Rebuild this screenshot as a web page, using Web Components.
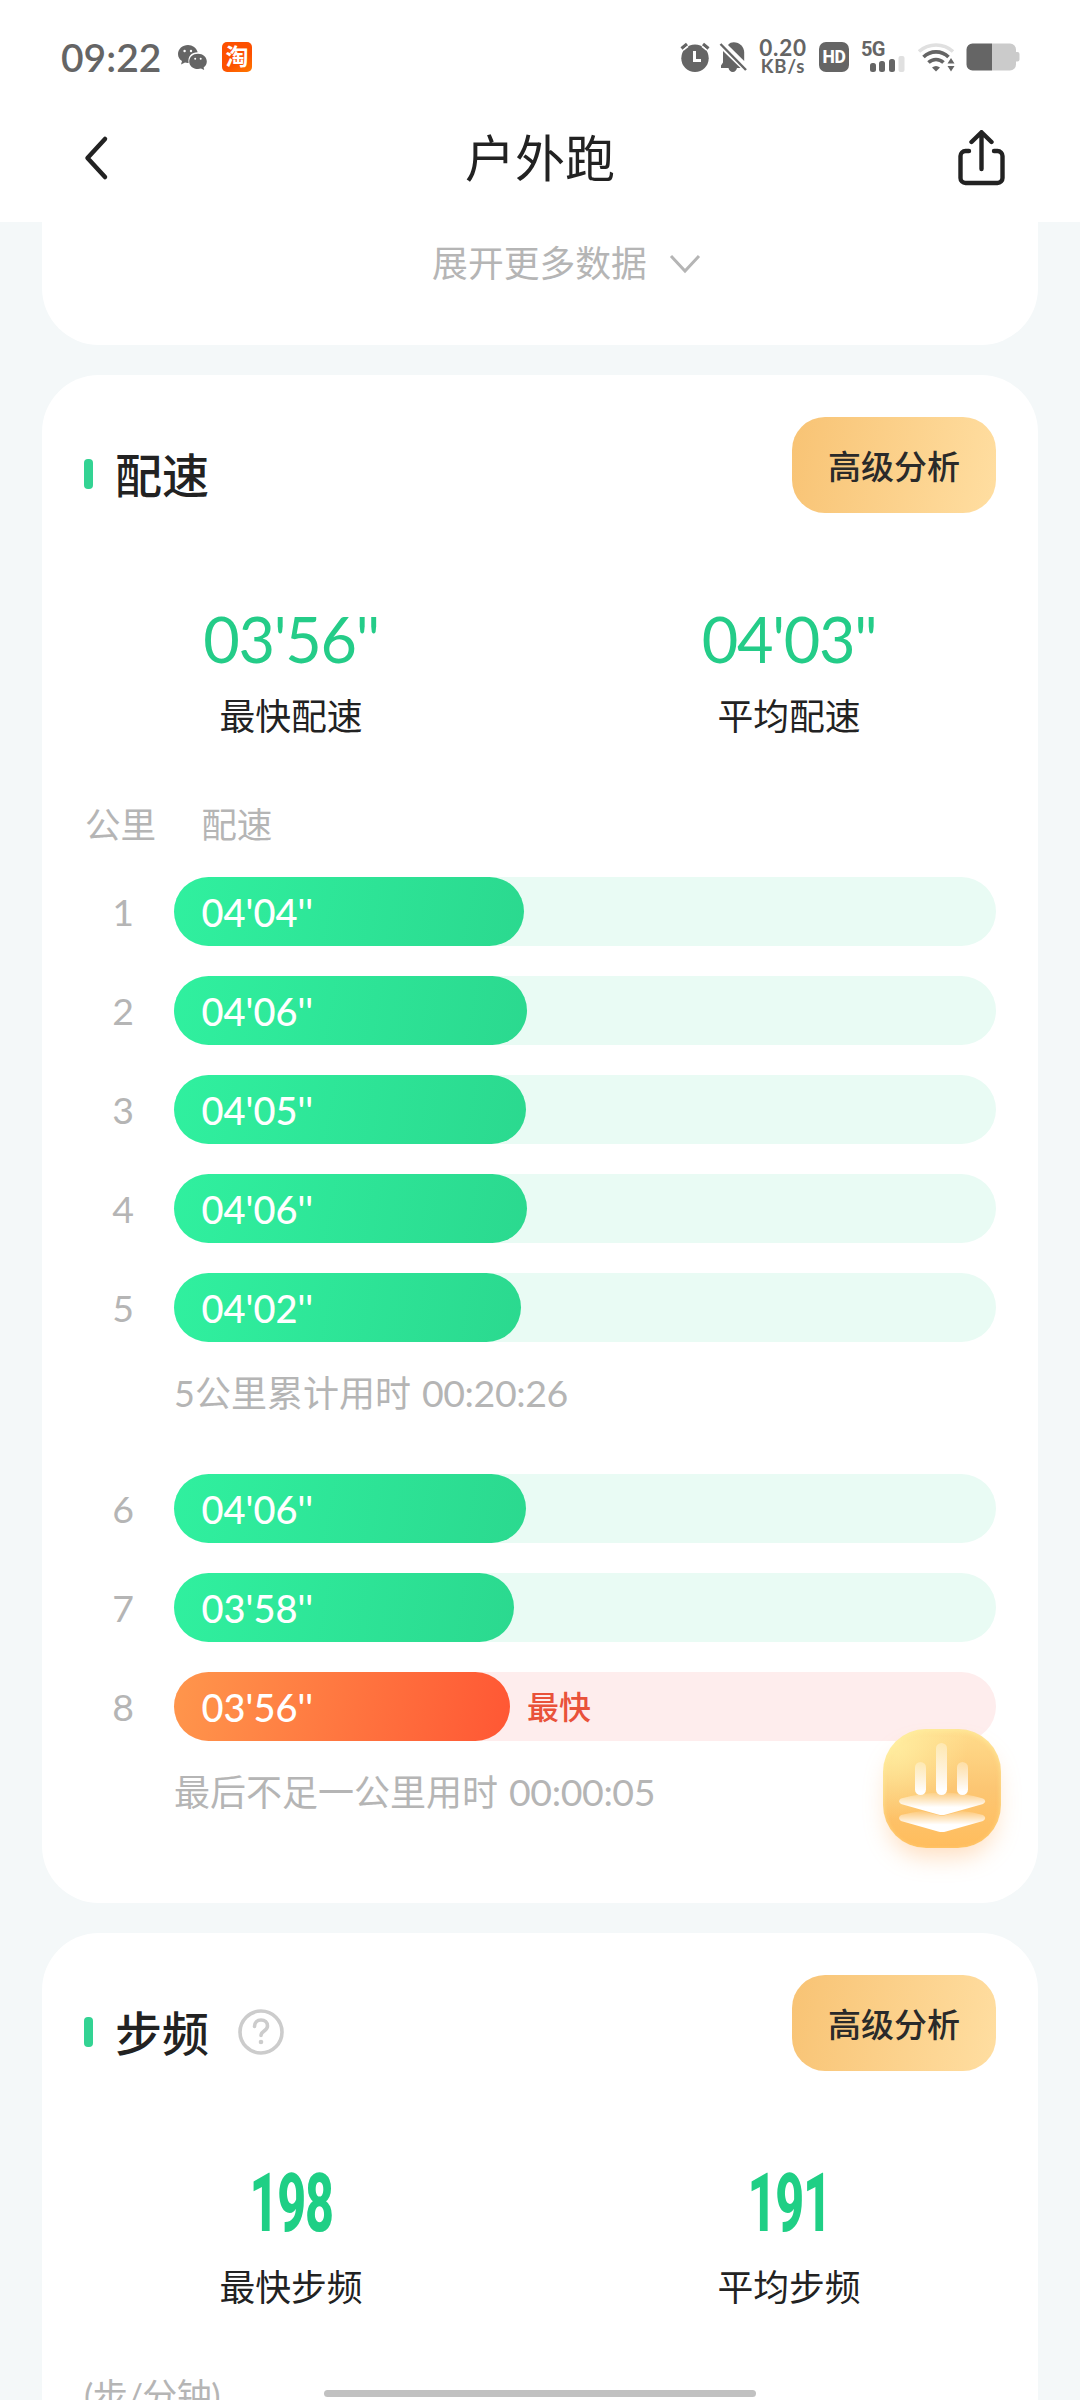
<!DOCTYPE html>
<html lang="zh-CN">
<head>
<meta charset="utf-8">
<title>户外跑</title>
<style>
  body {
    margin: 0;
    font-family: Lato, 'Noto Sans CJK SC', sans-serif;
    --color-text: #222;
    --color-sub: #b5b5b5;
    --color-status: #656565;
    --color-green: #24cc88;
    --color-bg: #f4f8f9;
  }
</style>
</head>
<body>
<run-page>
  <status-bar slot="top" time="09:22"></status-bar>
  <nav-bar slot="top">户外跑</nav-bar>

  <data-card class="summary">
    <expand-button>展开更多数据</expand-button>
  </data-card>

  <data-card class="pace">
    <card-header title-text="配速" action="高级分析"></card-header>
    <stat-group>
      <stat-item value="03'56''" label="最快配速"></stat-item>
      <stat-item value="04'03&quot;" label="平均配速"></stat-item>
    </stat-group>
    <pace-list>
      <pace-row km="1" pace="04'04''" width="350"></pace-row>
      <pace-row km="2" pace="04'06''" width="353"></pace-row>
      <pace-row km="3" pace="04'05''" width="352"></pace-row>
      <pace-row km="4" pace="04'06''" width="353"></pace-row>
      <pace-row km="5" pace="04'02''" width="347"></pace-row>
      <pace-note label="5公里累计用时" time="00:20:26"></pace-note>
      <pace-row km="6" pace="04'06''" width="352"></pace-row>
      <pace-row km="7" pace="03'58''" width="340"></pace-row>
      <pace-row km="8" pace="03'56''" width="336" tag="最快" fastest></pace-row>
      <pace-note label="最后不足一公里用时" time="00:00:05"></pace-note>
    </pace-list>
  </data-card>

  <data-card class="cadence">
    <card-header title-text="步频" action="高级分析" help></card-header>
    <stat-group>
      <stat-item value="198" label="最快步频" condensed></stat-item>
      <stat-item value="191" label="平均步频" condensed></stat-item>
    </stat-group>
    <chart-unit>(步/分钟)</chart-unit>
  </data-card>

  <analysis-fab slot="float"></analysis-fab>
</run-page>

<script>
class RunPage extends HTMLElement {
  constructor() {
    super();
    this.attachShadow({ mode: 'open' });
  }

  connectedCallback() {
    this.shadowRoot.innerHTML = `
      <style>
        :host {
          display: flex;
          flex-direction: column;
          position: relative;
          width: 1080px;
          height: 2400px;
          overflow: hidden;
          background: var(--color-bg);
          color: var(--color-text);
        }
        .run-page__top {
          flex: none;
          height: 222px;
          background: #fff;
        }
        .run-page__content {
          display: flex;
          flex-direction: column;
          gap: 30px;
          padding: 0 42px;
        }
        .run-page__home {
          position: absolute;
          left: 324px;
          bottom: 3px;
          width: 432px;
          height: 7px;
          border-radius: 4px;
          background: #c1c1c1;
        }
      </style>
      <div class='run-page__top'><slot name='top'></slot></div>
      <div class='run-page__content'><slot></slot></div>
      <slot name='float'></slot>
      <div class='run-page__home'></div>
    `;
  }
}
customElements.define('run-page', RunPage);

class StatusBar extends HTMLElement {
  constructor() {
    super();
    this.attachShadow({ mode: 'open' });
  }

  connectedCallback() {
    this.render();
  }

  get styles() {
    return `
      <style>
        :host {
          display: flex;
          align-items: center;
          box-sizing: border-box;
          height: 94px;
          padding: 20px 60px 0 61px;
          color: var(--color-status);
        }
        svg {
          display: block;
          flex: none;
        }
        .time {
          width: 117px;
          font-size: 39px;
          font-weight: 600;
          line-height: 48px;
          white-space: nowrap;
        }
        .taobao {
          width: 30px;
          height: 30px;
          margin-left: 15px;
          border-radius: 5px;
          background: linear-gradient(150deg, #fd5000 60%, #ff7a00);
          color: #fff;
          font-size: 23px;
          font-weight: 700;
          line-height: 29px;
          text-align: center;
        }
        .spacer {
          flex: 1;
        }
        .speed {
          display: flex;
          flex-direction: column;
          align-items: center;
          width: 52px;
          margin: 0 10px 0 9px;
          font-weight: 700;
        }
        .speed__num {
          font-size: 22.5px;
          line-height: 18px;
          letter-spacing: 0.8px;
        }
        .speed__unit {
          font-size: 18.5px;
          line-height: 18px;
          letter-spacing: 0.9px;
        }
        .hd {
          width: 30px;
          height: 30px;
          border-radius: 7px;
          background: var(--color-status);
          color: #fff;
          font: 800 17.5px/30px Roboto, sans-serif;
          letter-spacing: -0.3px;
          text-align: center;
        }
        .network {
          display: grid;
          width: 44px;
          height: 30px;
          margin: 0 13px 0 12px;
        }
        .network > * {
          grid-area: 1 / 1;
        }
        .network__type {
          font: 700 20px/15px Roboto, sans-serif;
          letter-spacing: -0.6px;
        }
      </style>
    `;
  }

  createHTML({ time }) {
    return `
      <span class='time'>${time}</span>
      <svg width='29' height='26' viewBox='0 0 29 26' fill='#656565'>
        <path d='M10 1C4.500 1 0 4.900 0 10c0 3 1.500 5.500 4 7l-1 3.500 4-2c1.200.4 2.500.5 3.600.4C9.500 12 14 8.200 19.700 8.300 18.500 4 14.500 1 10 1z'/>
        <path d='M20 9.700c-5 0-8.800 3.400-8.800 7.700s3.800 7.600 8.800 7.600c1 0 2-.1 3-.4l3.200 1.400-.6-2.600c2-1.400 3.200-3.500 3.200-6 0-4.300-3.900-7.700-8.800-7.700z'/>
        <g fill='#fff'><circle cx='6.600' cy='7' r='1.200'/><circle cx='13' cy='7' r='1.200'/><circle cx='17.200' cy='14.800' r='1'/><circle cx='22.700' cy='14.800' r='1'/></g>
      </svg>
      <span class='taobao'>淘</span>
      <span class='spacer'></span>
      <svg width='30' height='30' viewBox='0 0 30 30' fill='#656565'>
        <circle cx='15' cy='16.300' r='13.700'/>
        <path d='M1.500 6.500L7 2M28.500 6.500L23 2' stroke='#656565' stroke-width='3.200'/>
        <path d='M8 4.300L3.500 8M22 4.300L26.500 8' stroke='#fff' stroke-width='1.600'/>
        <path d='M14.500 9v9.500H21' fill='none' stroke='#fff' stroke-width='3'/>
      </svg>
      <svg width='29' height='30' viewBox='0 0 29 30' style='margin-left:9px'>
        <path d='M9 3C10.500 1 12.700.3 14.700.3c5.800 0 10.500 4.500 10.500 10.300V19z' fill='#656565'/>
        <path d='M4 9L21.500 26H18c-.5 2.300-2 4-4.200 4s-4-1.700-4.300-4H2v-2.500l2-3z' fill='#656565'/>
        <path d='M1.500 2L27 28' stroke='#656565' stroke-width='2.400'/>
      </svg>
      <div class='speed'>
        <span class='speed__num'>0.20</span>
        <span class='speed__unit'>KB/s</span>
      </div>
      <span class='hd'>HD</span>
      <div class='network'>
        <span class='network__type'>5G</span>
        <svg width='44' height='30' viewBox='0 0 44 30' fill='#656565'>
          <rect x='9' y='21' width='6' height='9' rx='2.500'/>
          <rect x='18' y='19' width='6' height='11' rx='2.500'/>
          <rect x='28' y='17' width='6' height='13' rx='2.500'/>
          <rect x='37.500' y='14' width='6' height='16' rx='2' fill='#e0e0e0'/>
        </svg>
      </div>
      <svg width='37' height='30' viewBox='0 0 37 30' fill='none' stroke-width='3.600'>
        <path d='M1 9.500C10.500 .800 25.500 .800 35 9.500' stroke='#e0e0e0'/>
        <path d='M5.500 15C12.500 8.200 23.500 8.200 30.500 15' stroke='#656565'/>
        <path d='M10.500 20.500C14.700 16.400 21.300 16.400 25.500 20.500' stroke='#656565'/>
        <path d='M18 29.500l-4-4q4-3 8 0z' fill='#656565'/>
        <path d='M33 16l3.500 5.500h-7zM33 29.500L29.500 24h7z' fill='#656565'/>
      </svg>
      <svg width='54' height='28' viewBox='0 0 54 28' style='margin-left:11px'>
        <path d='M26 .5h18a6 6 0 0 1 6 6V9h1.500a2 2 0 0 1 2 2v5.500a2 2 0 0 1-2 2H50v3a6 6 0 0 1-6 6H26z' fill='#cbcbcb'/>
        <path d='M26 .5v27H6.500a6 6 0 0 1-6-6v-15a6 6 0 0 1 6-6z' fill='#656565'/>
      </svg>
    `;
  }

  render() {
    const html = this.createHTML({ time: this.getAttribute('time') });
    this.shadowRoot.innerHTML = `
      ${this.styles}
      ${html}
    `;
  }
}
customElements.define('status-bar', StatusBar);

class NavBar extends HTMLElement {
  constructor() {
    super();
    this.attachShadow({ mode: 'open' });
  }

  connectedCallback() {
    this.shadowRoot.innerHTML = `
      <style>
        :host {
          display: flex;
          align-items: center;
          justify-content: space-between;
          height: 128px;
          padding: 0 75px 0 83px;
        }
        .nav-bar__title {
          margin: 0;
          font-size: 50px;
          font-weight: 400;
          line-height: 60px;
        }
        .nav-bar__back {
          width: 39px;
        }
        svg {
          display: block;
        }
      </style>
      <div class='nav-bar__back'>
        <svg width='26' height='46' viewBox='0 0 26 46' fill='none' stroke='#222' stroke-width='4.500' stroke-linecap='round' stroke-linejoin='round'>
          <path d='M22 4L4.500 23 22 42'/>
        </svg>
      </div>
      <h1 class='nav-bar__title'><slot></slot></h1>
      <svg width='47' height='56' viewBox='0 0 47 56' fill='none' stroke='#222' stroke-width='4.400' stroke-linecap='round' stroke-linejoin='round'>
        <path d='M11 21H7.500a5 5 0 0 0-5 5v22a5 5 0 0 0 5 5h32a5 5 0 0 0 5-5V26a5 5 0 0 0-5-5H36M23.500 39V3M13.500 12l10-9.800 10 9.800'/>
      </svg>
    `;
  }
}
customElements.define('nav-bar', NavBar);

class DataCard extends HTMLElement {
  constructor() {
    super();
    this.attachShadow({ mode: 'open' });
  }

  connectedCallback() {
    this.shadowRoot.innerHTML = `
      <style>
        :host {
          display: flex;
          flex-direction: column;
          box-sizing: border-box;
          padding: 42px 42px 0;
          border-radius: 57px;
          background: #fff;
        }
        :host(.summary) {
          height: 123px;
          padding-top: 0;
          border-top-left-radius: 0;
          border-top-right-radius: 0;
        }
        :host(.pace) {
          height: 1528px;
        }
        :host(.cadence) {
          height: 700px;
        }
      </style>
      <slot></slot>
    `;
  }
}
customElements.define('data-card', DataCard);

class ExpandButton extends HTMLElement {
  constructor() {
    super();
    this.attachShadow({ mode: 'open' });
  }

  connectedCallback() {
    this.shadowRoot.innerHTML = `
      <style>
        :host {
          display: flex;
          align-items: center;
          justify-content: center;
          gap: 21px;
          height: 83px;
          padding-left: 54px;
          color: var(--color-sub);
          font-size: 35.8px;
          line-height: 54px;
        }
      </style>
      <span><slot></slot></span>
      <svg width='34' height='20' viewBox='0 0 34 20' fill='none' stroke='#b5b5b5' stroke-width='3'>
        <path d='M3 2l14 15L31 2'/>
      </svg>
    `;
  }
}
customElements.define('expand-button', ExpandButton);

class CardHeader extends HTMLElement {
  constructor() {
    super();
    this.attachShadow({ mode: 'open' });
  }

  connectedCallback() {
    this.render();
  }

  get styles() {
    return `
      <style>
        :host {
          display: flex;
          justify-content: space-between;
          height: 96px;
        }
        .card-header__left {
          display: flex;
          align-items: center;
          height: 114px;
        }
        .card-header__mark {
          width: 9px;
          height: 30px;
          margin-right: 22px;
          border-radius: 4px;
          background: #33d393;
        }
        .card-header__title {
          margin: 0;
          padding-top: 2px;
          font-size: 47px;
          font-weight: 500;
          line-height: 60px;
        }
        .card-header__help {
          display: block;
          margin-left: 29px;
        }
        .card-header__action {
          width: 204px;
          height: 96px;
          padding: 0;
          border: 0;
          border-radius: 33px;
          background: linear-gradient(100deg, #f8c374, #ffdea1);
          color: #2a2a2a;
          font: 500 33px/96px 'Noto Sans CJK SC', sans-serif;
        }
      </style>
    `;
  }

  get helpIcon() {
    return `
      <svg class='card-header__help' width='46' height='46' viewBox='0 0 46 46' fill='none' stroke='#ccc' stroke-width='3.600' stroke-linecap='round'>
        <circle cx='23' cy='23' r='21'/>
        <path d='M16.500 17.500c0-4 2.700-6.500 6.500-6.500s6.500 2.500 6.500 6c0 5-6.500 5-6.500 9.500'/>
        <circle cx='23' cy='33' r='2.300' fill='#ccc' stroke='none'/>
      </svg>
    `;
  }

  createHTML({ title, action, help }) {
    return `
      <div class='card-header__left'>
        <span class='card-header__mark'></span>
        <h2 class='card-header__title'>${title}</h2>
        ${help ? this.helpIcon : ''}
      </div>
      <button class='card-header__action'>${action}</button>
    `;
  }

  render() {
    const props = {
      title: this.getAttribute('title-text'),
      action: this.getAttribute('action'),
      help: this.hasAttribute('help'),
    };
    this.shadowRoot.innerHTML = `
      ${this.styles}
      ${this.createHTML(props)}
    `;
  }
}
customElements.define('card-header', CardHeader);

class StatGroup extends HTMLElement {
  constructor() {
    super();
    this.attachShadow({ mode: 'open' });
  }

  connectedCallback() {
    this.shadowRoot.innerHTML = `
      <style>
        :host {
          display: grid;
          grid-template-columns: 1fr 1fr;
          margin: 86px -42px 0;
        }
      </style>
      <slot></slot>
    `;
  }
}
customElements.define('stat-group', StatGroup);

class StatItem extends HTMLElement {
  constructor() {
    super();
    this.attachShadow({ mode: 'open' });
  }

  connectedCallback() {
    this.render();
  }

  get styles() {
    return `
      <style>
        :host {
          display: flex;
          flex-direction: column;
          align-items: center;
        }
        .stat-item__value {
          height: 80px;
          color: var(--color-green);
          font-size: 63px;
          line-height: 80px;
          letter-spacing: -1.3px;
          white-space: nowrap;
        }
        .stat-item__label {
          margin-top: 11px;
          font-size: 35.8px;
          line-height: 54px;
        }
        :host([condensed]) .stat-item__value {
          color: #1fcf85;
          font-family: Roboto, sans-serif;
          font-size: 81px;
          font-weight: 800;
          line-height: 94px;
          letter-spacing: -2px;
          transform: scaleX(0.62);
        }
        :host([condensed]) .stat-item__label {
          margin-top: 24px;
          margin-bottom: 0;
        }
      </style>
    `;
  }

  createHTML({ value, label }) {
    return `
      <span class='stat-item__value'>${value}</span>
      <span class='stat-item__label'>${label}</span>
    `;
  }

  render() {
    const props = {
      value: this.getAttribute('value'),
      label: this.getAttribute('label'),
    };
    this.shadowRoot.innerHTML = `
      ${this.styles}
      ${this.createHTML(props)}
    `;
  }
}
customElements.define('stat-item', StatItem);

class PaceList extends HTMLElement {
  constructor() {
    super();
    this.attachShadow({ mode: 'open' });
  }

  connectedCallback() {
    this.shadowRoot.innerHTML = `
      <style>
        :host {
          display: flex;
          flex-direction: column;
          margin-top: 53px;
        }
        .pace-list__head {
          display: flex;
          gap: 45px;
          height: 80px;
          padding-left: 1px;
          color: var(--color-sub);
          font-size: 35.6px;
          line-height: 55px;
        }
        .pace-list__rows {
          display: flex;
          flex-direction: column;
          gap: 30px;
        }
      </style>
      <div class='pace-list__head'><span>公里</span><span>配速</span></div>
      <div class='pace-list__rows'><slot></slot></div>
    `;
  }
}
customElements.define('pace-list', PaceList);

class PaceRow extends HTMLElement {
  constructor() {
    super();
    this.attachShadow({ mode: 'open' });
  }

  connectedCallback() {
    this.render();
  }

  get styles() {
    return `
      <style>
        :host {
          display: flex;
          height: 69px;
          font-size: 38px;
          line-height: 70px;
        }
        .pace-row__km {
          width: 78px;
          margin-right: 12px;
          color: var(--color-sub);
          font-size: 37.5px;
          text-align: center;
        }
        .pace-row__track {
          flex: 1;
          display: flex;
          border-radius: 35px;
          background: #e9fbf4;
        }
        .pace-row__fill {
          box-sizing: border-box;
          padding-left: 27.5px;
          border-radius: 35px;
          background: linear-gradient(100deg, #30f09f, #2bd98f);
          color: #fff;
          font-weight: 500;
        }
        .pace-row__tag {
          margin-left: 17px;
          color: #e9523a;
          font-size: 32px;
          font-weight: 500;
        }
        :host([fastest]) .pace-row__track {
          background: #feeded;
        }
        :host([fastest]) .pace-row__fill {
          background: linear-gradient(100deg, #ff964c, #ff5734);
        }
      </style>
    `;
  }

  createHTML({ km, pace, width, tag }) {
    return `
      <span class='pace-row__km'>${km}</span>
      <div class='pace-row__track'>
        <div class='pace-row__fill' style='width: ${width}px'>${pace}</div>
        ${tag ? `<span class='pace-row__tag'>${tag}</span>` : ''}
      </div>
    `;
  }

  render() {
    const props = {
      km: this.getAttribute('km'),
      pace: this.getAttribute('pace'),
      width: this.getAttribute('width'),
      tag: this.getAttribute('tag'),
    };
    this.shadowRoot.innerHTML = `
      ${this.styles}
      ${this.createHTML(props)}
    `;
  }
}
customElements.define('pace-row', PaceRow);

class PaceNote extends HTMLElement {
  constructor() {
    super();
    this.attachShadow({ mode: 'open' });
  }

  connectedCallback() {
    const label = this.getAttribute('label');
    const time = this.getAttribute('time');
    this.shadowRoot.innerHTML = `
      <style>
        :host {
          display: flex;
          align-items: baseline;
          gap: 11px;
          height: 78px;
          margin: -6px 0 0 90px;
          color: var(--color-sub);
          font-size: 36px;
          line-height: 54px;
          white-space: nowrap;
        }
        .pace-note__time {
          font-size: 37.5px;
          letter-spacing: -0.4px;
        }
      </style>
      <span>${label}</span>
      <span class='pace-note__time'>${time}</span>
    `;
  }
}
customElements.define('pace-note', PaceNote);

class ChartUnit extends HTMLElement {
  constructor() {
    super();
    this.attachShadow({ mode: 'open' });
  }

  connectedCallback() {
    this.shadowRoot.innerHTML = `
      <style>
        :host {
          display: block;
          margin-top: 53px;
          color: var(--color-sub);
          font-size: 35px;
          line-height: 54px;
          letter-spacing: -0.6px;
        }
      </style>
      <slot></slot>
    `;
  }
}
customElements.define('chart-unit', ChartUnit);

// Floating entry, lies over the cards
class AnalysisFab extends HTMLElement {
  constructor() {
    super();
    this.attachShadow({ mode: 'open' });
  }

  connectedCallback() {
    this.shadowRoot.innerHTML = `
      <style>
        :host {
          position: absolute;
          left: 883px;
          top: 1729px;
          width: 118px;
          height: 119px;
          border-radius: 43px;
          background:
            radial-gradient(circle at 8% 12%, #ffeda0 0, rgba(255, 231, 150, 0) 50%),
            linear-gradient(180deg, #ffdc8c, #fcc673 50%, #ffbd5d);
          box-shadow: 0 14px 24px -6px rgba(255, 170, 90, 0.4), inset 0 2px 5px rgba(255, 240, 160, 0.7);
        }
        svg {
          display: block;
        }
      </style>
      <svg width='118' height='119' viewBox='0 0 118 119'>
        <defs>
          <linearGradient id='bar' x1='0' y1='0' x2='0' y2='1'>
            <stop offset='0' stop-color='#fff' stop-opacity='.3'/>
            <stop offset='.9' stop-color='#fff'/>
          </linearGradient>
          <linearGradient id='layer' x1='0' y1='0' x2='0' y2='1'>
            <stop offset='0' stop-color='#fff' stop-opacity='.1'/>
            <stop offset='.65' stop-color='#fff'/>
          </linearGradient>
        </defs>
        <g fill='url(#layer)'>
          <path d='M18 69.500Q38 64 59 63.500 82 64 100 69.500 104.500 72 100 75L63 85.500Q59 86.500 55 85.500L18 75Q14 72 18 69.500z'/>
          <path d='M18 86Q30 83 39 82L55 86Q59 87 63 86L79 82Q90 83 100 86 104.500 89 100 92L63 102.500Q59 103.500 55 102.500L18 92Q14 89 18 86z'/>
        </g>
        <g fill='url(#bar)'>
          <rect x='32' y='33' width='11' height='33' rx='5.500'/>
          <rect x='53' y='14' width='11' height='52' rx='5.500'/>
          <rect x='74' y='33' width='11' height='33' rx='5.500'/>
        </g>
      </svg>
    `;
  }
}
customElements.define('analysis-fab', AnalysisFab);
</script>
</body>
</html>
